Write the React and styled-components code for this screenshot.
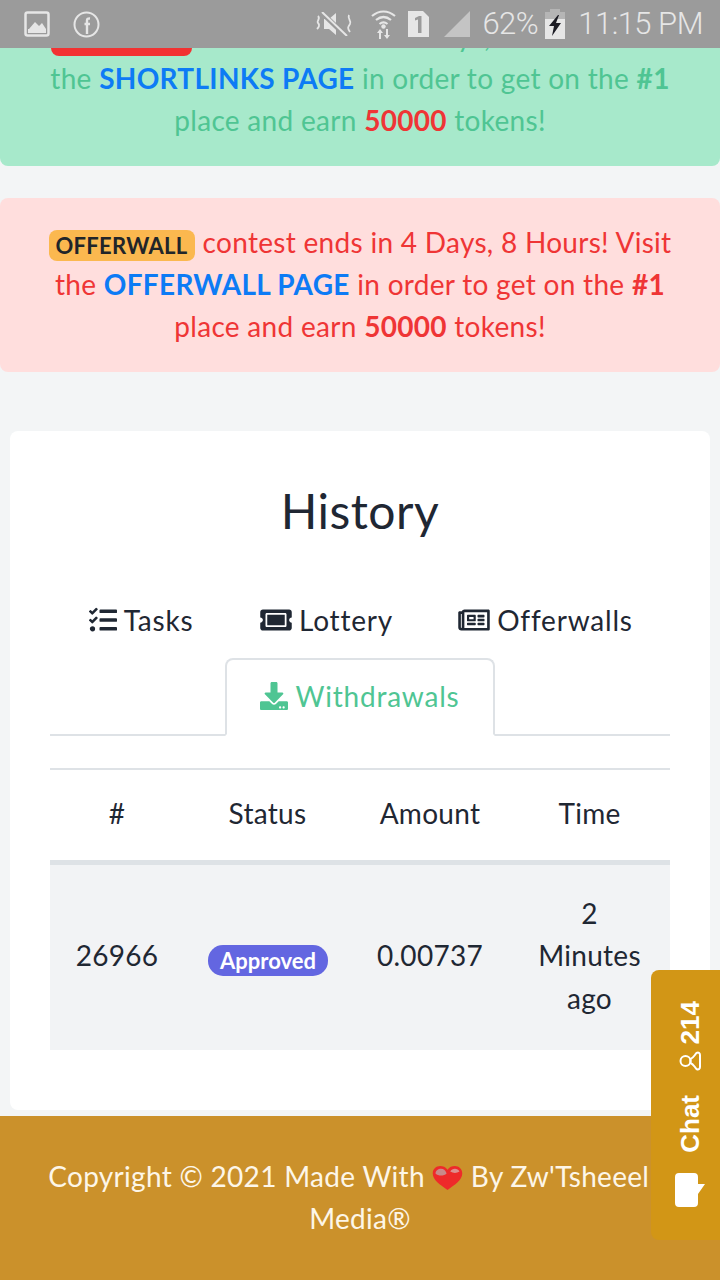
import React from "react";
import styled, { createGlobalStyle } from "styled-components";
import { FaTasks, FaTicketAlt, FaRegNewspaper, FaDownload } from "react-icons/fa";

const Global = createGlobalStyle`
  html, body { margin: 0; padding: 0; }
  body {
    background: #f3f5f6;
    font-family: "Lato", "Noto Sans", sans-serif;
    font-size: 28px;
    letter-spacing: 0.3px;
    line-height: 42px;
    color: #1f2733;
  }
`;

const Screen = styled.div`
  position: relative;
  width: 720px;
  height: 1280px;
  overflow: hidden;
`;

// the page is scrolled a little in the screenshot
const Scroller = styled.div`
  margin-top: -8px;
  display: flex;
  flex-direction: column;
`;

const StatusBar = styled.div`
  position: absolute;
  top: 0;
  left: 0;
  right: 0;
  height: 48px;
  background: #9b9b9b;
  color: #e6e6e6;
  display: flex;
  align-items: center;
  padding: 0 17px 0 24px;
  z-index: 5;
`;

const StatusLeft = styled.div`
  display: flex;
  align-items: center;
  gap: 23px;
  flex: 1;
`;

const StatusRight = styled.div`
  display: flex;
  align-items: center;
`;

const Slot = styled.span`
  display: flex;
  margin-left: ${(p) => p.$left || 0}px;
`;

const StatusText = styled.span`
  font-family: "Roboto", sans-serif;
  font-weight: 300;
  font-size: 31px;
  line-height: 48px;
  letter-spacing: -0.5px;
  margin-left: ${(p) => p.$left}px;
`;

const Alert = styled.div`
  background: ${(p) => p.$bg};
  color: ${(p) => p.$color};
  border-radius: 8px;
  padding: 23px 40px 25px;
  text-align: center;
  margin-bottom: 32px;
`;

const Badge = styled.span`
  display: inline-block;
  background: ${(p) => p.$bg};
  color: #212529;
  font-size: ${(p) => p.$size || 22}px;
  font-weight: 700;
  line-height: 31px;
  padding: 0 7px;
  border-radius: 8px;
  margin-right: 8px;
  vertical-align: -1px;
`;

const PageLink = styled.a`
  color: #0d7bf5;
  font-weight: 700;
`;

const Strong = styled.strong`
  font-weight: 700;
  color: ${(p) => p.$color || "inherit"};
`;

const Card = styled.section`
  background: #fff;
  border-radius: 8px;
  margin: 27px 10px 6px;
  padding: 49px 40px 60px;
`;

const Title = styled.h2`
  margin: 0 0 39px;
  font-size: 48px;
  letter-spacing: 0.5px;
  line-height: 62px;
  font-weight: 400;
  text-align: center;
`;

const Tabs = styled.div`
  display: flex;
  flex-wrap: wrap;
  justify-content: center;
  border-bottom: 2px solid #dee2e6;
  margin-bottom: 32px;
`;

const Tab = styled.div`
  display: flex;
  align-items: center;
  justify-content: center;
  gap: 7px;
  height: ${(p) => (p.$active ? 78 : 77)}px;
  padding-bottom: 2px;
  box-sizing: border-box;
  letter-spacing: 0.8px;
  width: ${(p) => p.$width}px;
  margin-bottom: ${(p) => (p.$active ? "-2px" : "0")};
  color: ${(p) => (p.$active ? "#4fc593" : "#1f2733")};
  background: #fff;
  border: 2px solid ${(p) => (p.$active ? "#dee2e6" : "transparent")};
  border-bottom: ${(p) => (p.$active ? "2px solid #fff" : "0")};
  border-radius: 8px 8px 0 0;
  svg {
    width: ${(p) => p.$icon || 28}px;
    height: 28px;
  }
`;

const Table = styled.table`
  width: 620px;
  border-collapse: collapse;
  table-layout: fixed;
  text-align: center;
  border-top: 2px solid #dee2e6;
`;

const HeadCell = styled.th`
  box-sizing: border-box;
  font-weight: 400;
  padding: 22px 10px 26px;
  border-bottom: 5px solid #dee2e6;
  width: ${(p) => p.$width}px;
`;

const Row = styled.tr`
  background: #f2f3f5;
`;

const Cell = styled.td`
  box-sizing: border-box;
  padding: 26.5px 24px 30.5px;
  line-height: 42.5px;
`;

const Pill = styled.span`
  display: inline-block;
  background: #6366e1;
  color: #fff;
  font-size: 22px;
  letter-spacing: 0;
  font-weight: 700;
  line-height: 31px;
  padding: 0 12px;
  border-radius: 15px;
  vertical-align: -3px;
  white-space: nowrap;
`;

const Footer = styled.footer`
  background: #cb912b;
  color: #fdf6e8;
  text-align: center;
  padding: 39px 40px 100px;
`;

const Heart = styled.svg`
  width: 31px;
  height: 24px;
  vertical-align: -3px;
`;

const ChatButton = styled.div`
  position: absolute;
  right: 0;
  top: 970px;
  width: 69px;
  height: 270px;
  box-sizing: border-box;
  background: #d29616;
  color: #fff;
  border-radius: 8px 0 0 8px;
  display: flex;
  flex-direction: column;
  align-items: center;
  padding: 31px 0 0 9px;
  z-index: 4;
`;

const ChatLabel = styled.span`
  writing-mode: vertical-rl;
  transform: rotate(180deg);
  font-family: "Liberation Sans", sans-serif;
  font-weight: 700;
  font-size: 26px;
  letter-spacing: 0;
  line-height: 30px;
  margin-top: ${(p) => p.$top || "0"};
`;

const ChatIcon = styled.svg`
  margin-top: ${(p) => p.$top};
`;

const GalleryIcon = () => (
  <svg width="26" height="26" viewBox="0 0 26 26">
    <rect x="1.5" y="1.5" width="23" height="23" rx="2" fill="none" stroke="#e6e6e6" strokeWidth="2.5" />
    <rect x="4" y="18" width="18" height="4" fill="#e6e6e6" />
    <path d="M5 18l6-7 4 4 3-3 4 6z" fill="#e6e6e6" />
  </svg>
);

const FacebookIcon = () => (
  <svg width="27" height="27" viewBox="0 0 27 27">
    <circle cx="13.5" cy="13.5" r="12" fill="none" stroke="#e6e6e6" strokeWidth="2" />
    <path d="M14 23V13h-2.500M14 13h3M14 13V9.500c0-1.500 1-2.200 3-2" fill="none" stroke="#e6e6e6" strokeWidth="2.400" />
  </svg>
);

const MuteIcon = () => (
  <svg width="38" height="24" viewBox="0 0 38 24">
    <path d="M9 7h5l7-6v22l-7-6H9z" fill="#e6e6e6" />
    <path d="M6 0l25 24" stroke="#9b9b9b" strokeWidth="5" />
    <path d="M7 0l25 24" stroke="#e6e6e6" strokeWidth="2" />
    <path d="M3 4c3 3-2 5 0 7s1 4-1 6M34 3c-2 4 3 6 1 9s-3 4 0 8" fill="none" stroke="#e6e6e6" strokeWidth="1.800" />
  </svg>
);

const WifiIcon = () => (
  <svg width="27" height="30" viewBox="0 0 27 30">
    <path d="M2 7c7-6 16-6 23 0M6 11c5-4 10-4 15 0M9.500 15c2.500-2 5.500-2 8 0" fill="none" stroke="#e6e6e6" strokeWidth="2.200" />
    <circle cx="13.500" cy="17.500" r="2.200" fill="#e6e6e6" />
    <path d="M10 20l-3 4h2v6h2v-6h2zM17 30l3-4h-2v-6h-2v6h-2z" fill="#e6e6e6" />
  </svg>
);

const SimIcon = () => (
  <svg width="21" height="26" viewBox="0 0 21 26">
    <path d="M0 0h15l6 6v20H0z" fill="#e6e6e6" />
    <path d="M7 7l4-2h2.500v17H10V8.500l-3 1z" fill="#9b9b9b" />
  </svg>
);

const SignalIcon = () => (
  <svg width="26" height="26" viewBox="0 0 26 26">
    <path d="M0 26L26 0v26z" fill="#c4c4c4" />
  </svg>
);

const BatteryIcon = () => (
  <svg width="20" height="30" viewBox="0 0 20 30">
    <rect x="5" y="0" width="10" height="3" fill="#b5b5b5" />
    <rect x="0" y="3" width="20" height="7" fill="#b5b5b5" />
    <rect x="0" y="10" width="20" height="20" fill="#e6e6e6" />
    <path d="M13 6L4 17h5l-2 10 9-13h-5l3-8z" fill="#1c1c24" />
  </svg>
);

const App = () => (
  <Screen>
    <Global />
    <StatusBar>
      <StatusLeft>
        <GalleryIcon />
        <FacebookIcon />
      </StatusLeft>
      <StatusRight>
        <Slot><MuteIcon /></Slot>
        <Slot $left={17}><WifiIcon /></Slot>
        <Slot $left={11}><SimIcon /></Slot>
        <Slot $left={15}><SignalIcon /></Slot>
        <StatusText $left={12}>62%</StatusText>
        <Slot $left={7}><BatteryIcon /></Slot>
        <StatusText $left={13}>11:15 PM</StatusText>
      </StatusRight>
    </StatusBar>

    <Scroller>
      <Alert $bg="#a7e9cb" $color="#4fc593">
        <Badge $bg="#f23232" $size={20}>SHORTLINKS</Badge>
        contest ends in 4 Days, 8 Hours! Visit the <PageLink>SHORTLINKS PAGE</PageLink> in order to get on the <Strong>#1</Strong> place and earn <Strong $color="#ef3535">50000</Strong> tokens!
      </Alert>
      <Alert $bg="#ffdedd" $color="#ef3535">
        <Badge $bg="#fbb84f">OFFERWALL</Badge>
        contest ends in 4 Days, 8 Hours! Visit the <PageLink>OFFERWALL PAGE</PageLink> in order to get on the <Strong>#1</Strong> place and earn <Strong>50000</Strong> tokens!
      </Alert>

      <Card>
        <Title>History</Title>
        <Tabs>
          <Tab $width={174}><FaTasks /> Tasks</Tab>
          <Tab $width={197} $icon={32}><FaTicketAlt /> Lottery</Tab>
          <Tab $width={241} $icon={32}><FaRegNewspaper /> Offerwalls</Tab>
          <Tab $width={270} $active><FaDownload /> Withdrawals</Tab>
        </Tabs>
        <Table>
          <thead>
            <tr>
              <HeadCell $width={134}>#</HeadCell>
              <HeadCell $width={167}>Status</HeadCell>
              <HeadCell $width={158}>Amount</HeadCell>
              <HeadCell $width={161}>Time</HeadCell>
            </tr>
          </thead>
          <tbody>
            <Row>
              <Cell>26966</Cell>
              <Cell><Pill>Approved</Pill></Cell>
              <Cell>0.00737</Cell>
              <Cell>2 Minutes ago</Cell>
            </Row>
          </tbody>
        </Table>
      </Card>

      <Footer>
        Copyright © 2021 Made With{" "}
        <Heart viewBox="0 0 32 26">
          <path d="M16 26C8 20 0 15 0 8c0-5 4-8 8-8 3 0 6 1 8 4 2-3 5-4 8-4 4 0 8 3 8 8 0 7-8 12-16 18z" fill="#ee2a2a" />
          <path d="M3 8c0-3 3-5 6-5s5 2 6 5c-3 3-9 3-12 0z" fill="#c98a8a" />
          <path d="M19 6c1-2 3-3 5-3s4 1 5 3c-3 2-7 2-10 0z" fill="#dd8f8f" />
        </Heart>{" "}
        By Zw'Tsheeel{"\u00a0\u00a0\u00a0"} Media®
      </Footer>
    </Scroller>

    <ChatButton>
      <ChatLabel>214</ChatLabel>
      <ChatIcon $top="5px" width="22" height="24" viewBox="0 0 22 24">
        <g fill="none" stroke="#fff" strokeWidth="2">
          <circle cx="6.500" cy="12" r="5" />
          <path d="M11.500 10c3-1 4-4 6-6 2-1 3.500 0 3.500 2v12c0 2-1.500 3-3.500 2-2-2-3-5-6-6z" />
        </g>
      </ChatIcon>
      <ChatLabel $top="22px">Chat</ChatLabel>
      <ChatIcon $top="20px" width="30" height="34" viewBox="0 0 30 34">
        <path d="M4 0h15a4 4 0 0 1 4 4v7h7l-7 10v9a4 4 0 0 1-4 4H4a4 4 0 0 1-4-4V4a4 4 0 0 1 4-4z" fill="#fff" />
      </ChatIcon>
    </ChatButton>
  </Screen>
);

export default App;
